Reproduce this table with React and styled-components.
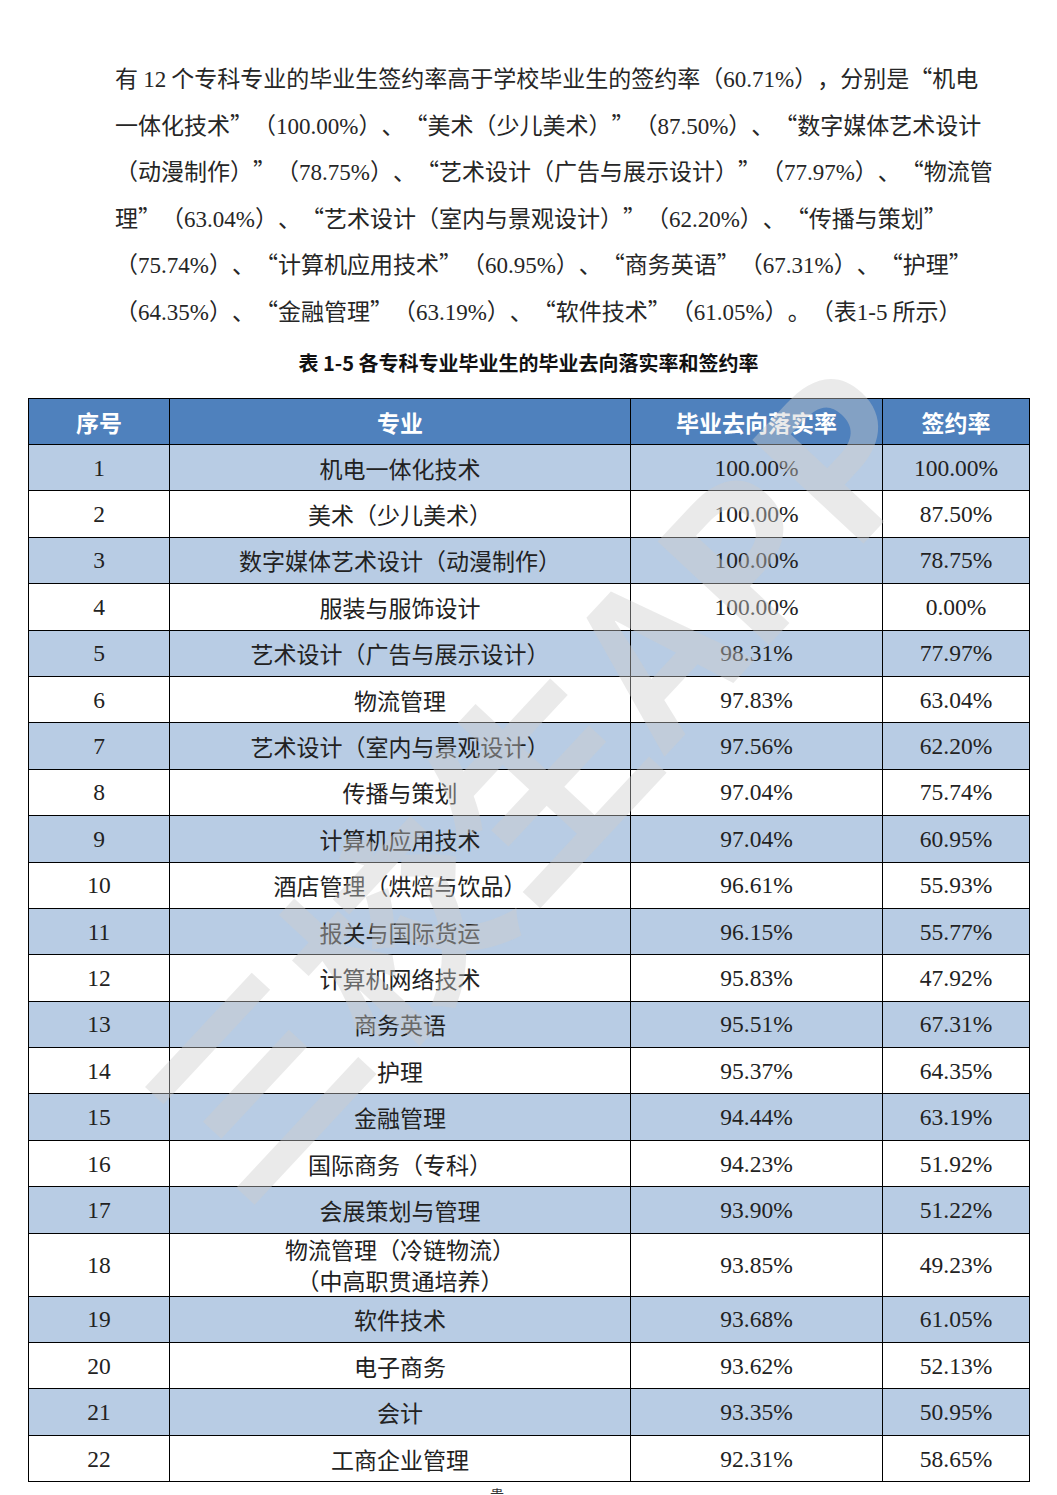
import React from "react";
import styled, { createGlobalStyle } from "styled-components";

const GlobalStyle = createGlobalStyle`
  html, body { margin: 0; padding: 0; background: #ffffff; }
  body {
    font-family: "Noto Sans CJK SC", sans-serif;
    color: #262626;
    text-spacing-trim: space-all;
  }
`;

const CJK = `"Noto Sans CJK SC", sans-serif`;
const NUM = `"Liberation Serif", "Times New Roman", serif`;

const Page = styled.div`
  position: relative;
  width: 1057px;
  height: 1495px;
  overflow: hidden;
  background: #ffffff;
`;

const Paragraph = styled.p`
  margin: 0;
  padding: 54px 0 0 115px;
  font-family: ${CJK};
  font-size: 23px;
  color: #262626;
  text-spacing-trim: space-all;
`;

const Line = styled.span`
  display: block;
  height: 46.5px;
  line-height: 46.5px;
  white-space: pre;
`;

const Num = styled.span`
  font-family: ${NUM};
  line-height: 1;
`;

const Caption = styled.h2`
  margin: 15px 0 0;
  height: 30px;
  line-height: 30px;
  text-align: center;
  font-family: "Noto Sans CJK SC", sans-serif;
  font-size: 20px;
  font-weight: 700;
  color: #111111;
`;

const Table = styled.table`
  margin: 20px 0 0 28px;
  width: 1001px;
  border-collapse: collapse;
  table-layout: fixed;
  border: 1.5px solid #000;
`;

const HeadCell = styled.th`
  height: 45px;
  padding: 0;
  background: #4f81bd;
  color: #ffffff;
  font-family: "Noto Sans CJK SC", sans-serif;
  font-size: 23px;
  font-weight: 700;
  text-align: center;
  border: 1px solid #000;
`;

const Row = styled.tr`
  background: ${(p) => (p.$alt ? "#b8cce4" : "#ffffff")};
  height: ${(p) => (p.$tall ? "63px" : "46.4px")};
`;

const Cell = styled.td`
  padding: 0;
  text-align: center;
  border: 1px solid #000;
  font-family: ${(p) => (p.$num ? NUM : CJK)};
  font-size: ${(p) => (p.$num ? "23.5px" : "23px")};
  line-height: ${(p) => (p.$tall ? "31px" : "28px")};
  color: #222222;
  white-space: pre;
`;

const Watermark = styled.div`
  position: absolute;
  left: 528px;
  top: 772px;
  transform: translate(-50%, -50%) rotate(-47deg);
  font-family: "Noto Sans CJK SC", sans-serif;
  font-size: 205px;
  font-weight: 700;
  line-height: 1;
  color: rgba(205, 205, 205, 0.42);
  white-space: nowrap;
  pointer-events: none;
  letter-spacing: 2px;
`;

const Footer = styled.div`
  margin: 4px 0 0 490px;
  font-family: ${CJK};
  font-size: 14px;
  line-height: 16px;
  color: #333;
`;

const lines = [
  "有 12 个专科专业的毕业生签约率高于学校毕业生的签约率（60.71%），分别是“机电",
  "一体化技术”（100.00%）、“美术（少儿美术）”（87.50%）、“数字媒体艺术设计",
  "（动漫制作）”（78.75%）、“艺术设计（广告与展示设计）”（77.97%）、“物流管",
  "理”（63.04%）、“艺术设计（室内与景观设计）”（62.20%）、“传播与策划”",
  "（75.74%）、“计算机应用技术”（60.95%）、“商务英语”（67.31%）、“护理”",
  "（64.35%）、“金融管理”（63.19%）、“软件技术”（61.05%）。（表1-5 所示）",
];

const rows = [
  ["1", "机电一体化技术", "100.00%", "100.00%"],
  ["2", "美术（少儿美术）", "100.00%", "87.50%"],
  ["3", "数字媒体艺术设计（动漫制作）", "100.00%", "78.75%"],
  ["4", "服装与服饰设计", "100.00%", "0.00%"],
  ["5", "艺术设计（广告与展示设计）", "98.31%", "77.97%"],
  ["6", "物流管理", "97.83%", "63.04%"],
  ["7", "艺术设计（室内与景观设计）", "97.56%", "62.20%"],
  ["8", "传播与策划", "97.04%", "75.74%"],
  ["9", "计算机应用技术", "97.04%", "60.95%"],
  ["10", "酒店管理（烘焙与饮品）", "96.61%", "55.93%"],
  ["11", "报关与国际货运", "96.15%", "55.77%"],
  ["12", "计算机网络技术", "95.83%", "47.92%"],
  ["13", "商务英语", "95.51%", "67.31%"],
  ["14", "护理", "95.37%", "64.35%"],
  ["15", "金融管理", "94.44%", "63.19%"],
  ["16", "国际商务（专科）", "94.23%", "51.92%"],
  ["17", "会展策划与管理", "93.90%", "51.22%"],
  ["18", "物流管理（冷链物流）\n（中高职贯通培养）", "93.85%", "49.23%"],
  ["19", "软件技术", "93.68%", "61.05%"],
  ["20", "电子商务", "93.62%", "52.13%"],
  ["21", "会计", "93.35%", "50.95%"],
  ["22", "工商企业管理", "92.31%", "58.65%"],
];

function renderLine(text, i) {
  const parts = text.split(/(\d[\d.\-]*%?)/);
  return (
    <Line key={i}>
      {parts.map((p, j) =>
        /^\d/.test(p) ? <Num key={j}>{p}</Num> : <React.Fragment key={j}>{p}</React.Fragment>
      )}
    </Line>
  );
}

export default function App() {
  return (
    <>
      <GlobalStyle />
      <Page>
        <Paragraph lang="zh-CN">{lines.map(renderLine)}</Paragraph>
        <Caption lang="zh-CN">表 1-5 各专科专业毕业生的毕业去向落实率和签约率</Caption>
        <Table lang="zh-CN">
          <colgroup>
            <col style={{ width: "141px" }} />
            <col style={{ width: "461px" }} />
            <col style={{ width: "252px" }} />
            <col style={{ width: "147px" }} />
          </colgroup>
          <thead>
            <tr>
              <HeadCell>序号</HeadCell>
              <HeadCell>专业</HeadCell>
              <HeadCell>毕业去向落实率</HeadCell>
              <HeadCell>签约率</HeadCell>
            </tr>
          </thead>
          <tbody>
            {rows.map((r, i) => {
              const tall = r[1].includes("\n");
              return (
                <Row key={r[0]} $alt={i % 2 === 0} $tall={tall}>
                  <Cell $num>{r[0]}</Cell>
                  <Cell $tall={tall}>{r[1]}</Cell>
                  <Cell $num>{r[2]}</Cell>
                  <Cell $num>{r[3]}</Cell>
                </Row>
              );
            })}
          </tbody>
        </Table>
        <Footer lang="zh-CN">贵</Footer>
        <Watermark aria-hidden="true">三校生APP</Watermark>
      </Page>
    </>
  );
}
